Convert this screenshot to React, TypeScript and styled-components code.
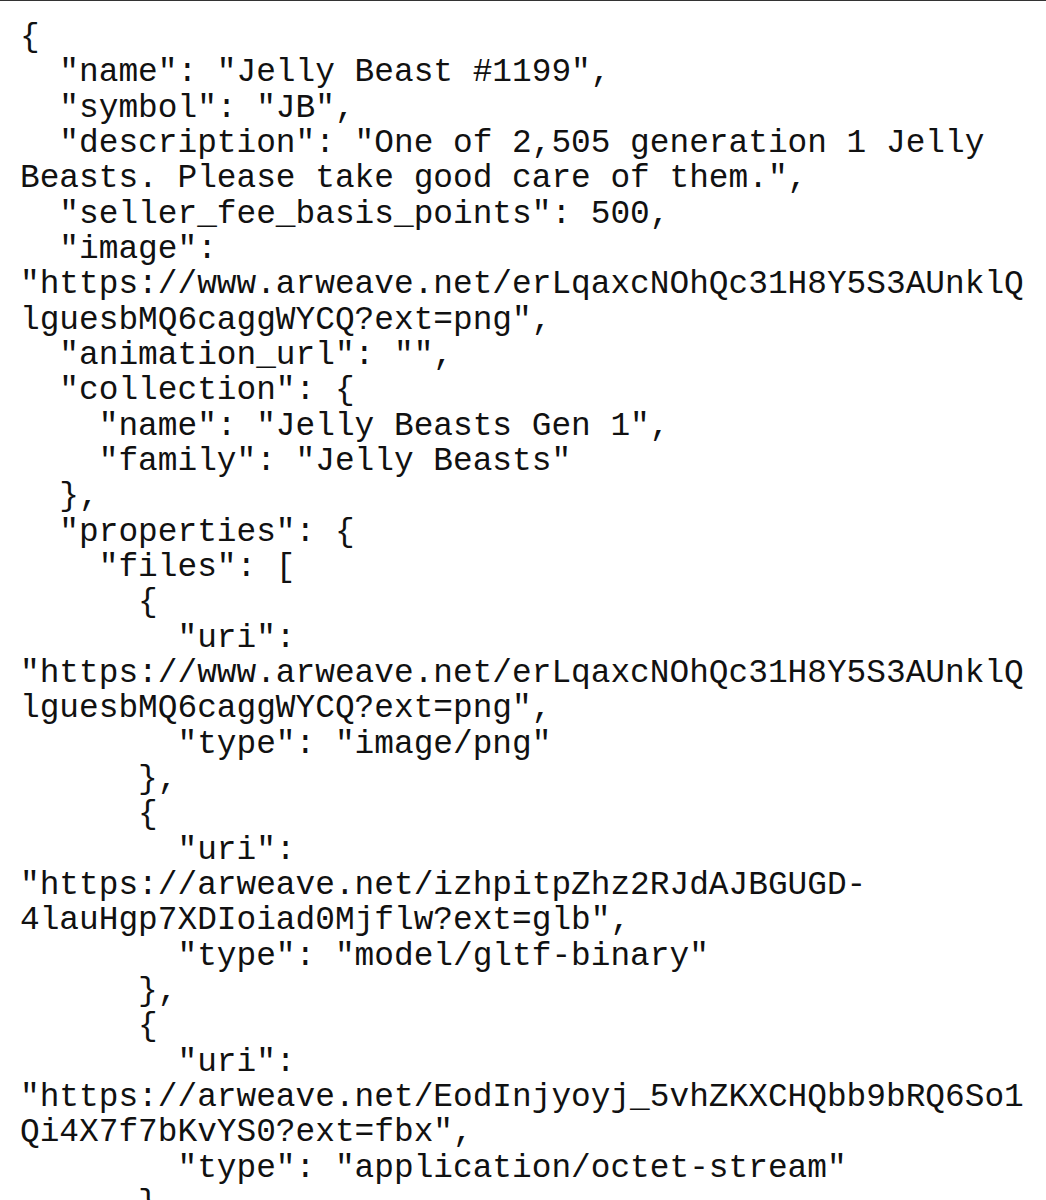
import React from "react";
import styled, { createGlobalStyle } from "styled-components";

const GlobalStyle = createGlobalStyle`
  html, body {
    margin: 0;
    padding: 0;
    background: #ffffff;
  }
`;

const Page = styled.div`
  width: 1046px;
  height: 1200px;
  box-sizing: border-box;
  border-top: 1px solid #333333;
  background: #ffffff;
  overflow: hidden;
`;

const Code = styled.pre`
  margin: 0;
  padding: 19px 0 0 20px;
  font-family: "Liberation Mono", "Courier New", monospace;
  font-size: 32.8px;
  line-height: 35.34px;
  color: #111111;
  display: flex;
  flex-direction: column;
`;

const Line = styled.span`
  display: block;
  white-space: pre;
  height: 35.34px;
`;

const lines: string[] = [
  "{",
  '  "name": "Jelly Beast #1199",',
  '  "symbol": "JB",',
  '  "description": "One of 2,505 generation 1 Jelly',
  'Beasts. Please take good care of them.",',
  '  "seller_fee_basis_points": 500,',
  '  "image":',
  '"https://www.arweave.net/erLqaxcNOhQc31H8Y5S3AUnklQ',
  'lguesbMQ6caggWYCQ?ext=png",',
  '  "animation_url": "",',
  '  "collection": {',
  '    "name": "Jelly Beasts Gen 1",',
  '    "family": "Jelly Beasts"',
  "  },",
  '  "properties": {',
  '    "files": [',
  "      {",
  '        "uri":',
  '"https://www.arweave.net/erLqaxcNOhQc31H8Y5S3AUnklQ',
  'lguesbMQ6caggWYCQ?ext=png",',
  '        "type": "image/png"',
  "      },",
  "      {",
  '        "uri":',
  '"https://arweave.net/izhpitpZhz2RJdAJBGUGD-',
  '4lauHgp7XDIoiad0Mjflw?ext=glb",',
  '        "type": "model/gltf-binary"',
  "      },",
  "      {",
  '        "uri":',
  '"https://arweave.net/EodInjyoyj_5vhZKXCHQbb9bRQ6So1',
  'Qi4X7f7bKvYS0?ext=fbx",',
  '        "type": "application/octet-stream"',
  "      }",
];

export default function App() {
  return (
    <>
      <GlobalStyle />
      <Page>
        <Code>
          {lines.map((l, i) => (
            <Line key={i}>{l}</Line>
          ))}
        </Code>
      </Page>
    </>
  );
}
